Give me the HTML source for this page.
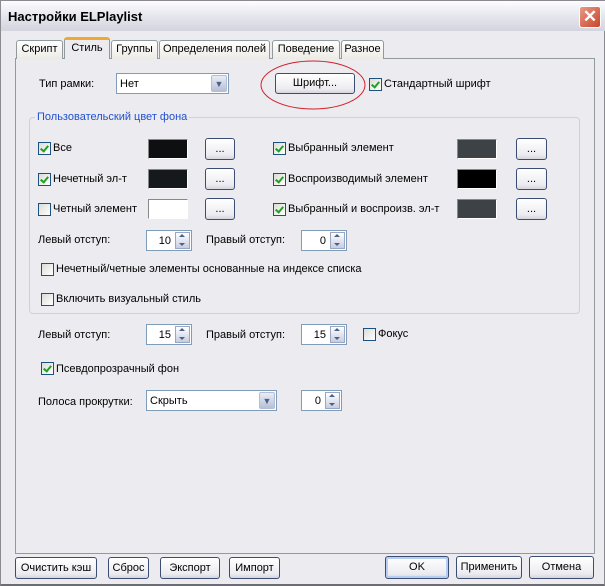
<!DOCTYPE html>
<html><head><meta charset="utf-8"><style>
*{box-sizing:border-box}
body{margin:0;width:605px;height:586px;overflow:hidden;background:#ecebef;font-family:"Liberation Sans",sans-serif;font-size:11px;color:#000}
.a{position:absolute;white-space:nowrap}
#win{position:absolute;left:0;top:0;width:605px;height:586px;border:1px solid #8a8a90;border-bottom:2px solid #6c6c72;background:#ecebef}
#title{position:absolute;left:0;top:0;width:605px;height:30px;background:linear-gradient(#fdfdfe,#e6e6ee 50%,#d3d4de);}
.btn{position:absolute;border:1px solid #3c4d74;border-radius:3px;background:linear-gradient(#ffffff,#ecebf0 80%,#d6d5de);text-align:center;line-height:20px;font-size:11px}
.cb{position:absolute;width:13px;height:13px;border:1px solid #1c5180;background:linear-gradient(135deg,#dcdcd6,#fff)}
.cb.on::after{content:"";position:absolute;left:3px;top:1px;width:3px;height:6px;border:solid #21a121;border-width:0 2px 2px 0;transform:rotate(40deg)}
.sw{position:absolute;width:40px;height:20px;border:1px solid;border-color:#888 #fff #fff #888}
.inp{position:absolute;height:21px;border:1px solid #7f9db9;background:#fff}
.spin{position:absolute;right:1px;top:1px;width:15px;height:17px;border:1px solid #9aa6c6;background:linear-gradient(#fff,#c6cde0);}
.spin::before{content:"";position:absolute;left:3px;top:1px;border:3px solid transparent;border-bottom:3px solid #4d6185;border-top:0}
.spin::after{content:"";position:absolute;left:3px;bottom:2px;border:3px solid transparent;border-top:3px solid #4d6185;border-bottom:0}
.num{position:absolute;right:20px;top:4px}
.dd{position:absolute;right:1px;top:1px;width:16px;height:17px;border:1px solid #b3bdd5;border-radius:2px;background:linear-gradient(#e9ecf5,#b6bfd6);font-size:9px;color:#4d6185;text-align:center;line-height:16px}
.tab{position:absolute;top:39px;height:19px;border:1px solid #919b9c;border-bottom:none;border-radius:3px 3px 0 0;background:linear-gradient(#fff,#ecebe6);text-align:center;line-height:17px}
</style></head><body>
<div id="win">
<div id="title"></div>
<div class="a" style="left:7px;top:8px;font-weight:bold;font-size:13px">Настройки ELPlaylist</div>
<div class="a" style="left:578px;top:5px;width:22px;height:22px;border:1px solid #fff;border-radius:3px;background:linear-gradient(135deg,#e89a86,#c8452c);color:#fff;font-size:17px;line-height:19px;text-align:center;font-weight:bold">✕</div>

<div class="a" style="left:14px;top:57px;width:580px;height:496px;border:1px solid #919b9c;background:#ecebef"></div>
<div class="tab" style="left:15px;width:47px">Скрипт</div>
<div class="tab" style="left:63px;top:36px;width:46px;height:22px;background:#ecebef;border-top:3px solid #f0a830;line-height:16px">Стиль</div>
<div class="tab" style="left:110px;width:47px">Группы</div>
<div class="tab" style="left:158px;width:111px">Определения полей</div>
<div class="tab" style="left:271px;width:68px">Поведение</div>
<div class="tab" style="left:340px;width:43px">Разное</div>

<div class="a" style="left:38px;top:77px">Тип рамки:</div>
<div class="inp" style="left:115px;top:72px;width:113px"><span class="a" style="left:3px;top:4px">Нет</span><div class="dd">&#9660;</div></div>
<div class="btn" style="left:274px;top:72px;width:80px;height:21px;line-height:19px">Шрифт...</div>
<svg class="a" style="left:258px;top:58px" width="108" height="52"><ellipse cx="54" cy="26" rx="52" ry="24" fill="none" stroke="#d0202a" stroke-width="1"/></svg>
<div class="cb on" style="left:368px;top:77px"></div>
<div class="a" style="left:383px;top:77px">Стандартный шрифт</div>

<div class="a" style="left:28px;top:116px;width:551px;height:197px;border:1px solid #d0d0d8;border-radius:4px"></div>
<div class="a" style="left:34px;top:110px;padding:0 2px;background:#ecebef;color:#2050d0">Пользовательский цвет фона</div>

<div class="cb on" style="left:37px;top:141px"></div><div class="a" style="left:52px;top:141px">Все</div>
<div class="sw" style="left:147px;top:138px;background:#0e0f11"></div>
<div class="btn" style="left:204px;top:137px;width:30px;height:22px">...</div>
<div class="cb on" style="left:272px;top:141px"></div><div class="a" style="left:287px;top:141px">Выбранный элемент</div>
<div class="sw" style="left:456px;top:138px;background:#3c4246"></div>
<div class="btn" style="left:515px;top:137px;width:31px;height:22px">...</div>

<div class="cb on" style="left:37px;top:172px"></div><div class="a" style="left:52px;top:172px">Нечетный эл-т</div>
<div class="sw" style="left:147px;top:168px;background:#15191c"></div>
<div class="btn" style="left:204px;top:167px;width:30px;height:22px">...</div>
<div class="cb on" style="left:272px;top:172px"></div><div class="a" style="left:287px;top:172px">Воспроизводимый элемент</div>
<div class="sw" style="left:456px;top:168px;background:#000"></div>
<div class="btn" style="left:515px;top:167px;width:31px;height:22px">...</div>

<div class="cb" style="left:37px;top:202px"></div><div class="a" style="left:52px;top:202px">Четный элемент</div>
<div class="sw" style="left:147px;top:198px;background:#fff"></div>
<div class="btn" style="left:204px;top:197px;width:30px;height:22px">...</div>
<div class="cb on" style="left:272px;top:202px"></div><div class="a" style="left:287px;top:202px">Выбранный и воспроизв. эл-т</div>
<div class="sw" style="left:456px;top:198px;background:#3c4246"></div>
<div class="btn" style="left:515px;top:197px;width:31px;height:22px">...</div>

<div class="a" style="left:37px;top:233px">Левый отступ:</div>
<div class="inp" style="left:145px;top:229px;width:46px"><span class="num">10</span><div class="spin"></div></div>
<div class="a" style="left:205px;top:233px">Правый отступ:</div>
<div class="inp" style="left:300px;top:229px;width:46px"><span class="num">0</span><div class="spin"></div></div>

<div class="cb" style="left:40px;top:262px"></div><div class="a" style="left:55px;top:262px">Нечетный/четные элементы основанные на индексе списка</div>
<div class="cb" style="left:40px;top:292px"></div><div class="a" style="left:55px;top:292px">Включить визуальный стиль</div>

<div class="a" style="left:37px;top:328px">Левый отступ:</div>
<div class="inp" style="left:145px;top:323px;width:46px"><span class="num">15</span><div class="spin"></div></div>
<div class="a" style="left:205px;top:328px">Правый отступ:</div>
<div class="inp" style="left:300px;top:323px;width:46px"><span class="num">15</span><div class="spin"></div></div>
<div class="cb" style="left:362px;top:327px"></div><div class="a" style="left:377px;top:327px">Фокус</div>

<div class="cb on" style="left:40px;top:361px"></div><div class="a" style="left:55px;top:362px">Псевдопрозрачный фон</div>

<div class="a" style="left:37px;top:395px">Полоса прокрутки:</div>
<div class="inp" style="left:145px;top:389px;width:131px"><span class="a" style="left:3px;top:4px">Скрыть</span><div class="dd">&#9660;</div></div>
<div class="inp" style="left:300px;top:389px;width:41px"><span class="num">0</span><div class="spin"></div></div>

<div class="btn" style="left:14px;top:556px;width:82px;height:22px">Очистить кэш</div>
<div class="btn" style="left:107px;top:556px;width:41px;height:22px">Сброс</div>
<div class="btn" style="left:159px;top:556px;width:60px;height:22px">Экспорт</div>
<div class="btn" style="left:228px;top:556px;width:51px;height:22px">Импорт</div>
<div class="btn" style="left:384px;top:555px;width:64px;height:23px;line-height:21px;box-shadow:inset 0 0 0 2px #b8cdf2">OK</div>
<div class="btn" style="left:455px;top:555px;width:66px;height:23px;line-height:21px">Применить</div>
<div class="btn" style="left:528px;top:555px;width:65px;height:23px;line-height:21px">Отмена</div>
</div>
</body></html>
